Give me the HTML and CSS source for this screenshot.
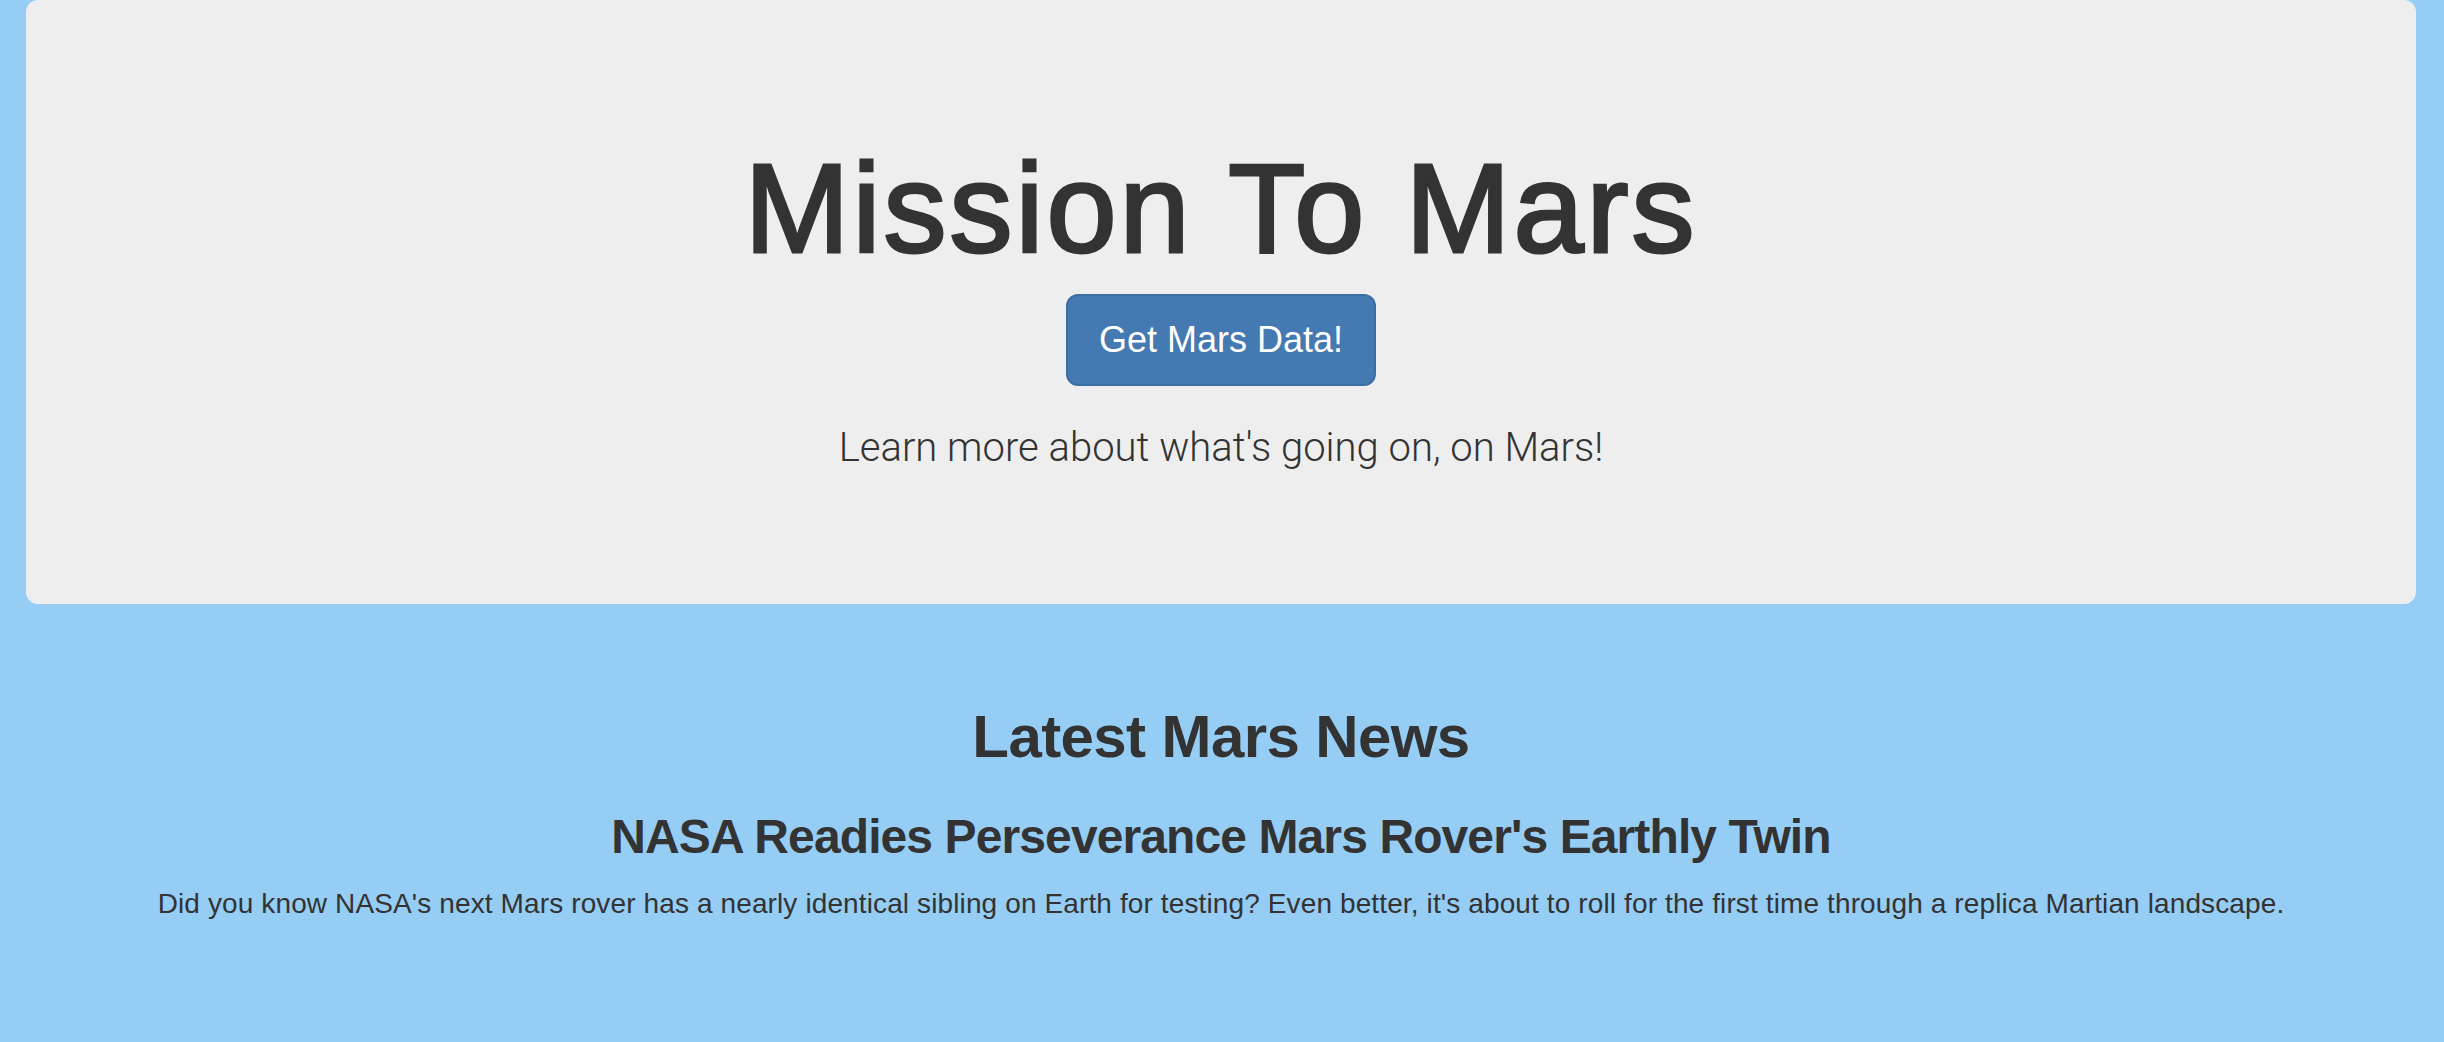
FILE: index.html
```html
<!DOCTYPE html>
<html lang="en">
<head>
<meta charset="utf-8">
<title>Mission To Mars</title>
<link rel="stylesheet" href="styles.css">
</head>
<body>
  <div class="page">
    <header class="jumbotron">
      <h1 class="jumbotron-title">Mission To Mars</h1>
      <p class="jumbotron-action"><a class="btn-primary" href="#">Get Mars Data!</a></p>
      <p class="lead">Learn more about what's going on, on Mars!</p>
    </header>
    <section class="news">
      <h2 class="news-heading">Latest Mars News</h2>
      <h3 class="news-title">NASA Readies Perseverance Mars Rover's Earthly Twin</h3>
      <p class="news-teaser">Did you know NASA's next Mars rover has a nearly identical sibling on Earth for testing? Even better, it's about to roll for the first time through a replica Martian landscape.</p>
    </section>
  </div>
</body>
</html>
```

FILE: styles.css
```css
html, body {
  margin: 0;
  padding: 0;
}

body {
  background: #95cdf5;
  color: #333333;
  font-family: "Liberation Sans", Arial, sans-serif;
  min-height: 1042px;
}

.page {
  padding: 0 28px 0 26px;
}

.jumbotron {
  background: #eeeeee;
  border-radius: 12px;
  padding: 139px 0 98px;
  text-align: center;
}

.jumbotron-title {
  margin: 0 0 16px;
  font-size: 126px;
  line-height: 139px;
  font-weight: 400;
  letter-spacing: 3px;
  -webkit-text-stroke: 3px #333333;
}

.jumbotron-action {
  margin: 0;
  display: flex;
  justify-content: center;
}

.btn-primary {
  display: block;
  background: #4479b1;
  border: 2px solid #3b6ea4;
  border-radius: 12px;
  color: #ffffff;
  text-decoration: none;
  font-size: 36px;
  line-height: 48px;
  padding: 20px 31px;
}

.lead {
  margin: 32px 0 28px;
  font-family: Roboto, "Liberation Sans", sans-serif;
  font-weight: 300;
  font-size: 40px;
  line-height: 60px;
}

.news {
  text-align: center;
  padding: 100px 0 0;
}

.news-heading {
  margin: 0 0 20px;
  font-size: 60px;
  line-height: 66px;
  font-weight: 700;
  letter-spacing: -0.6px;
}

.news-title {
  margin: 40px 0 21px;
  font-size: 48px;
  line-height: 53px;
  font-weight: 700;
  letter-spacing: -0.9px;
}

.news-teaser {
  margin: 0;
  font-size: 28px;
  line-height: 40px;
  letter-spacing: 0.12px;
}
```
